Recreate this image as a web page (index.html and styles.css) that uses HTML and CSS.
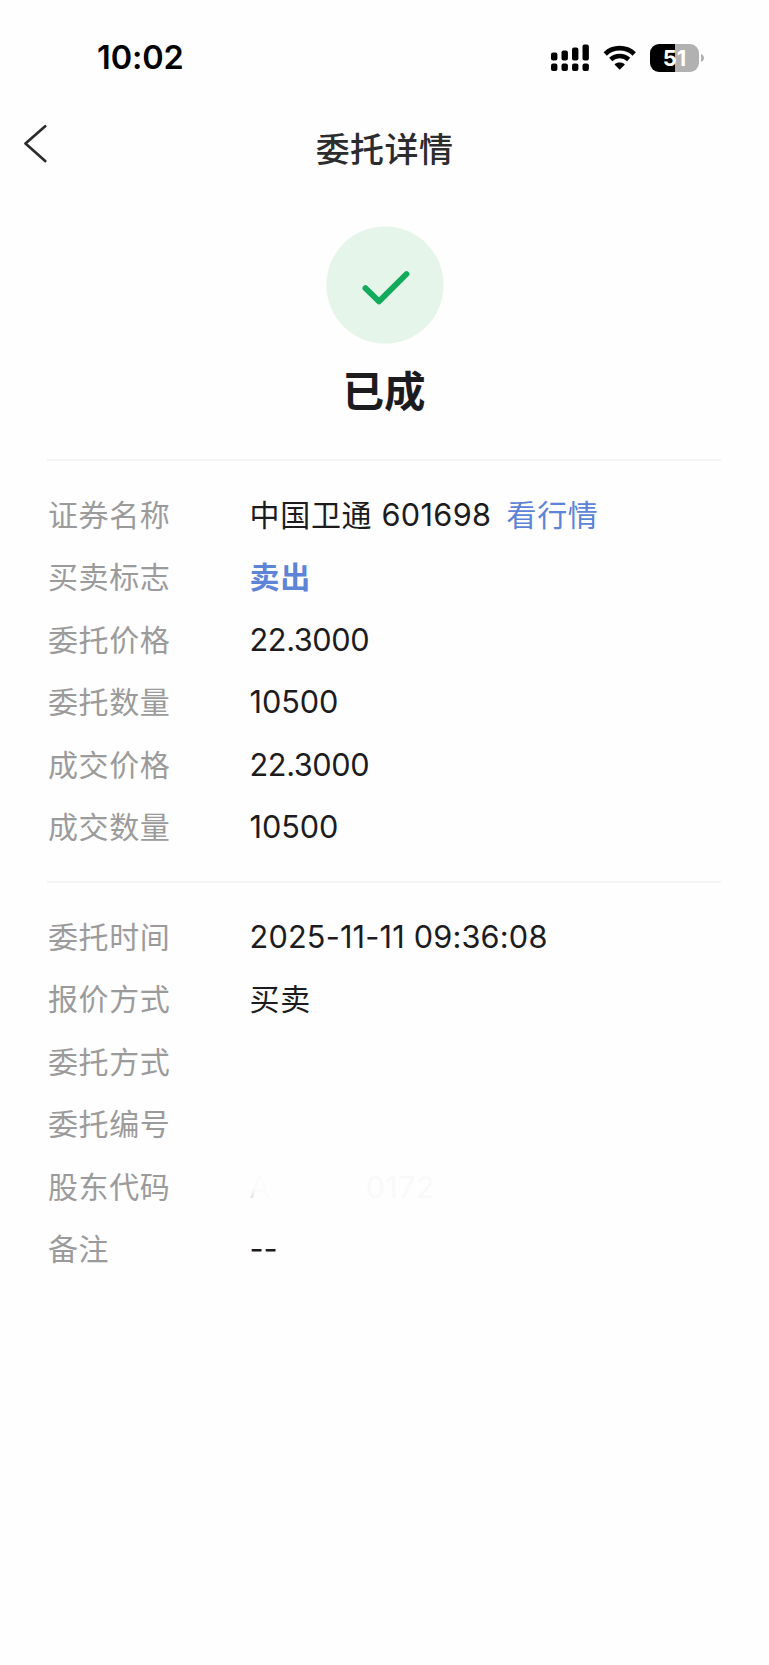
FILE: index.html
```
<!DOCTYPE html>
<html lang="zh-CN">
<head>
<meta charset="utf-8">
<title>委托详情</title>
<link rel="stylesheet" href="styles.css">
</head>
<body>
<header class="status-bar">
  <span class="time">10:02</span>
  <div class="status-icons">
    <svg class="signal" width="38" height="28" viewBox="0 0 38 28">
      <rect x="0" y="8.5" width="6.4" height="8" rx="2"/>
      <rect x="10.5" y="6.5" width="6.4" height="10" rx="2"/>
      <rect x="21" y="3.5" width="6.4" height="13" rx="2"/>
      <rect x="31.5" y="0.4" width="6.4" height="16.1" rx="2"/>
      <rect x="0" y="19.5" width="6.4" height="7.6" rx="2"/>
      <rect x="10.5" y="19.5" width="6.4" height="7.6" rx="2"/>
      <rect x="21" y="19.5" width="6.4" height="7.6" rx="2"/>
      <rect x="31.5" y="19.5" width="6.4" height="7.6" rx="2"/>
    </svg>
    <svg class="wifi" width="34" height="28" viewBox="0 0 34 28">
      <path d="M2.2 9.9 A21.2 21.2 0 0 1 31.2 9.9" fill="none" stroke="#000" stroke-width="4.8"/>
      <path d="M7.7 15.5 A13.2 13.2 0 0 1 25.7 15.5" fill="none" stroke="#000" stroke-width="4.5"/>
      <path d="M16.7 25.7 L11.5 20.4 C14 17.8 19.4 17.8 21.9 20.4 Z"/>
    </svg>
    <div class="battery"><span>51</span></div>
    <svg class="nub" width="4" height="10" viewBox="0 0 4 10"><path d="M0 1 C4 2.5 4 7.5 0 9 Z" fill="#b1b1b1"/></svg>
  </div>
</header>
<nav class="nav">
  <svg class="back" width="24" height="40" viewBox="0 0 24 40">
    <path d="M21.2 2.3 L1.5 19.6 L21.2 37" fill="none" stroke="#2b2b2d" stroke-width="2.7" stroke-linecap="round" stroke-linejoin="round"/>
  </svg>
  <h1 class="title">委托详情</h1>
</nav>
<main class="content">
  <section class="result">
    <svg class="check" width="118" height="118" viewBox="0 0 118 118">
      <circle cx="59" cy="59" r="58.6" fill="#e6f5e9"/>
      <path d="M39.4 62.2 L53 75.4 L80.5 48" fill="none" stroke="#12aa5c" stroke-width="5.8" stroke-linecap="round" stroke-linejoin="round"/>
    </svg>
    <h2 class="state">已成</h2>
  </section>
  <dl class="group">
    <div class="row"><dt>证券名称</dt><dd>中国卫通 <span class="num code">601698</span><a class="link">看行情</a></dd></div>
    <div class="row"><dt>买卖标志</dt><dd class="sell">卖出</dd></div>
    <div class="row"><dt>委托价格</dt><dd class="num price">22.3000</dd></div>
    <div class="row"><dt>委托数量</dt><dd class="num">10500</dd></div>
    <div class="row"><dt>成交价格</dt><dd class="num price">22.3000</dd></div>
    <div class="row"><dt>成交数量</dt><dd class="num">10500</dd></div>
  </dl>
  <dl class="group">
    <div class="row"><dt>委托时间</dt><dd class="num date">2025-11-11 09:36:08</dd></div>
    <div class="row"><dt>报价方式</dt><dd>买卖</dd></div>
    <div class="row"><dt>委托方式</dt><dd></dd></div>
    <div class="row"><dt>委托编号</dt><dd></dd></div>
    <div class="row"><dt>股东代码</dt><dd class="masked"><span class="initial">A</span><span>0172</span></dd></div>
    <div class="row"><dt>备注</dt><dd class="num">--</dd></div>
  </dl>
</main>
</body>
</html>
```
FILE: styles.css
```
* { box-sizing: border-box; }
body {
  margin: 0;
  min-height: 1665px;
  background: #fefefe;
  color: #1c1c1e;
  font-family: Inter, "Noto Sans CJK SC", sans-serif;
}
svg { display: block; flex: none; }
h1, h2, dl, dd { margin: 0; }

.status-bar {
  height: 115px;
  padding: 0 64px 0 97px;
  display: flex;
  justify-content: space-between;
  align-items: center;
  color: #000;
}
.time { font-size: 32.5px; font-weight: 600; line-height: 40px; letter-spacing: -0.1px; }
.status-icons { display: flex; align-items: center; }
.wifi { margin-left: 14px; }
.battery {
  width: 49px;
  height: 28px;
  margin: 0 2px 0 13px;
  border-radius: 9px;
  background: linear-gradient(to right, #000 25px, #b1b1b1 25px);
  color: #fff;
  font-size: 22px;
  font-weight: 700;
  line-height: 28px;
  text-align: center;
}

.nav {
  height: 66px;
  padding: 0 24px;
  display: grid;
  grid-template-columns: 24px 1fr 24px;
}
.back { margin-top: 9px; }
.title {
  padding-top: 2px;
  font-size: 34px;
  font-weight: 500;
  letter-spacing: 0.4px;
  line-height: 66px;
  text-align: center;
  color: #2c2c2e;
}

.content { padding: 0 48px; }
.result {
  height: 278px;
  padding-top: 45px;
  display: flex;
  flex-direction: column;
  align-items: center;
}
.state {
  margin-top: 18px;
  margin-right: 1px;
  font-size: 41.5px;
  font-weight: 700;
  line-height: 60px;
}
.group {
  height: 422px;
  margin: 0 0 0 -1px;
  padding: 22.5px 0 0 1px;
  border-top: 2px solid #f4f4f4;
}
.row {
  height: 62.5px;
  display: flex;
  align-items: center;
  font-size: 30px;
  line-height: 44px;
  white-space: nowrap;
}
.row dt {
  width: 201.5px;
  flex: none;
  color: #9b9b9b;
  letter-spacing: 0.6px;
}
.row dd { letter-spacing: 0.7px; }
.row .num { font-size: 30.7px; letter-spacing: -0.1px; }
.row .code { letter-spacing: 0.35px; }
.row .price { letter-spacing: -0.4px; }
.row .date { letter-spacing: 0.18px; }
.link { margin-left: 15px; color: #5d84d6; }
.row .sell { color: #5d84d6; font-weight: 700; }
.masked { display: flex; gap: 95px; color: #f9f9f9; }
.masked .initial {
  color: transparent;
  background: linear-gradient(80deg, #cfcfcf 0, #fafafa 8px, #fdfdfd 100%);
  background-clip: text;
  -webkit-background-clip: text;
}
```
